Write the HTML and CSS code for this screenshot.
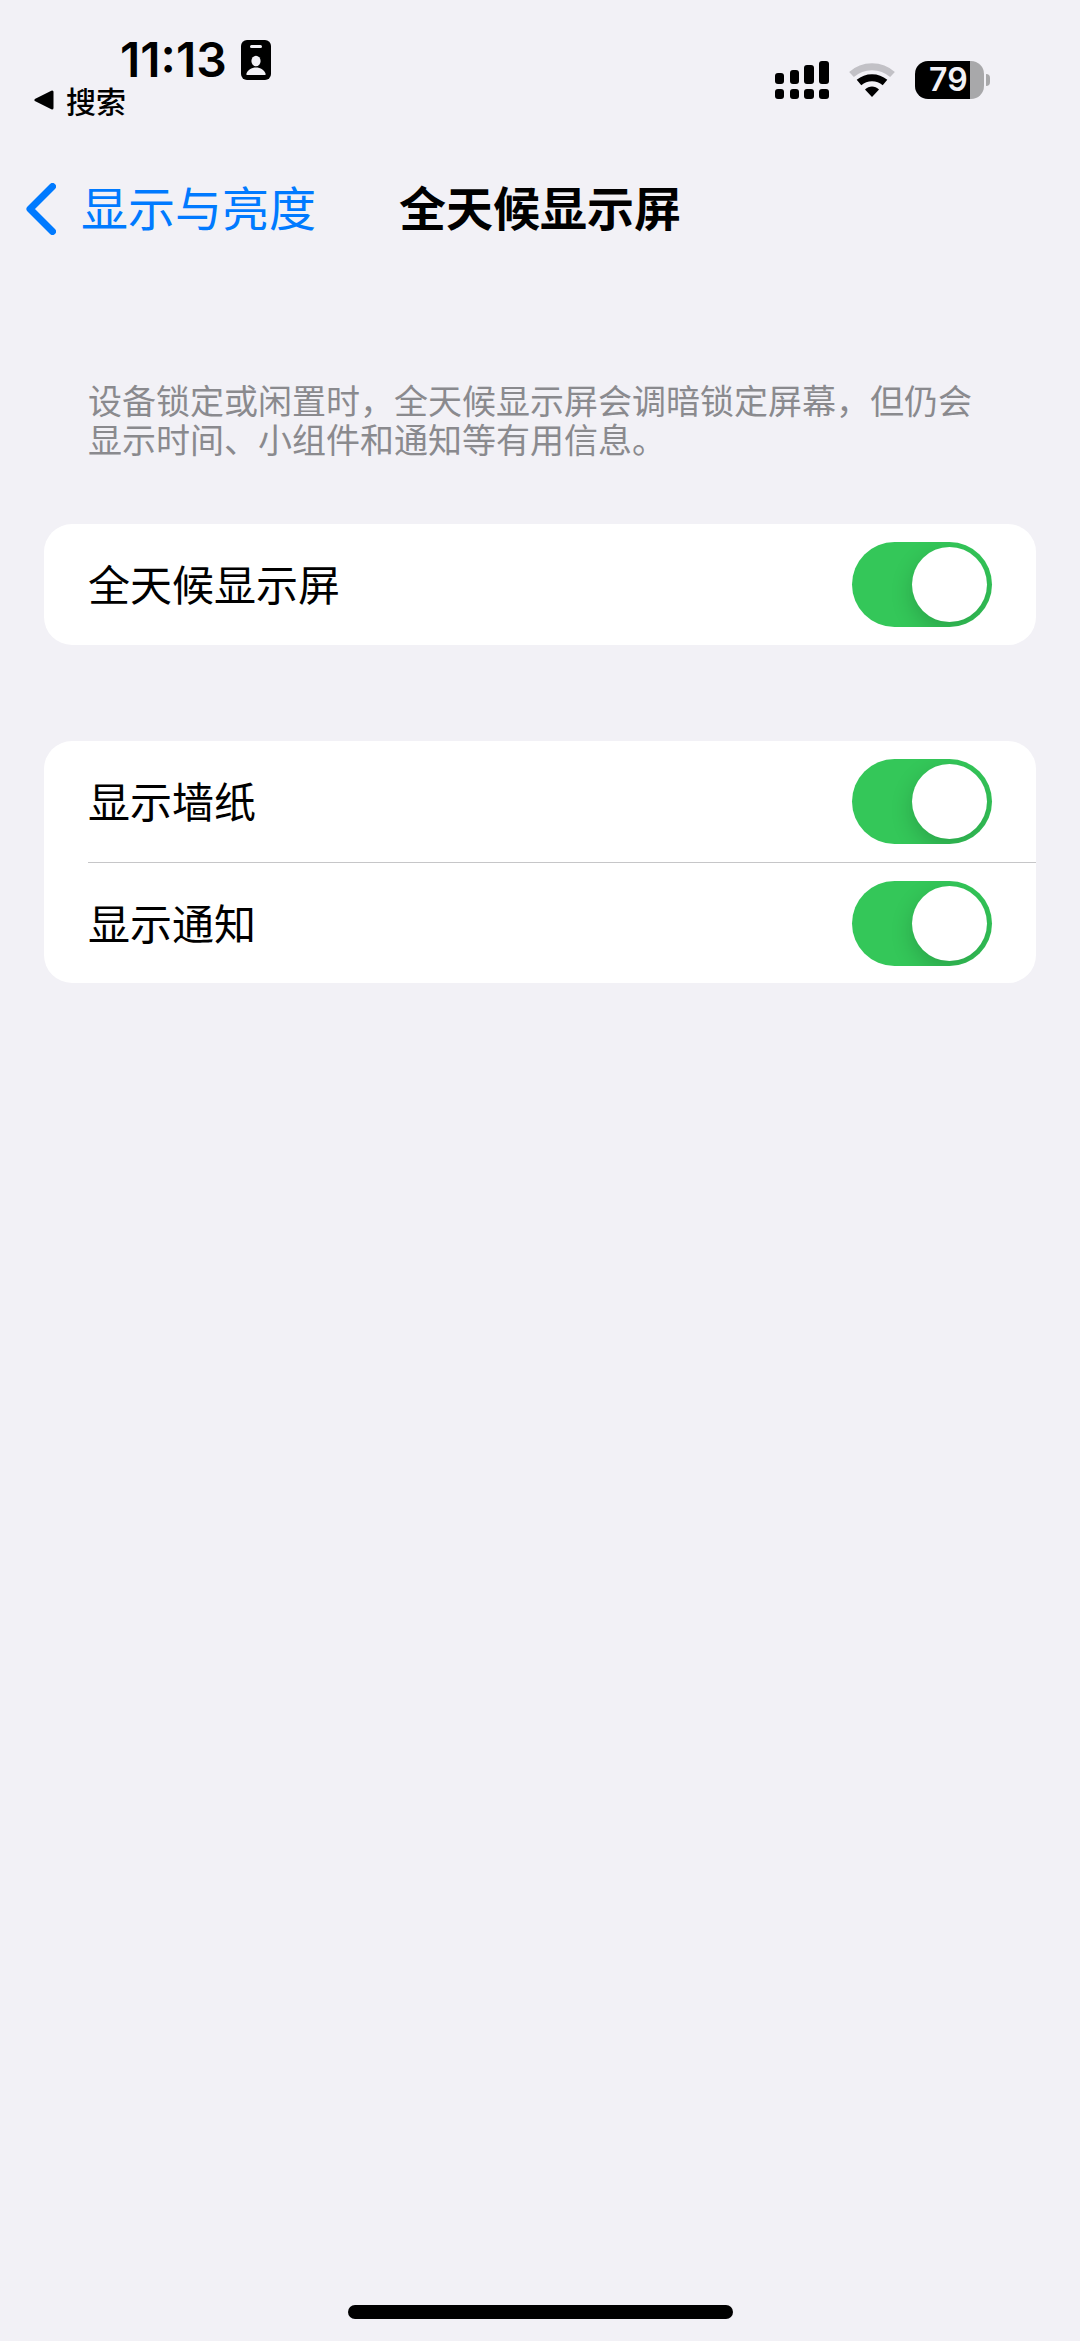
FILE: index.html
```html
<!DOCTYPE html>
<html lang="zh-CN">
<head>
    <meta charset="UTF-8">
    <meta name="viewport" content="width=device-width, initial-scale=1.0">
    <title>全天候显示屏</title>
    <link rel="stylesheet" href="styles.css">
</head>
<body>
    <header class="status-bar">
        <div class="status-left">
            <div class="clock">
                <time class="time">11:13</time>
                <svg class="id-card" width="30" height="40" viewBox="0 0 30 40" aria-hidden="true">
                    <rect width="30" height="40" rx="6" fill="#000"/>
                    <rect x="9" y="5" width="12" height="3" rx="1.500" fill="#f2f1f6"/>
                    <ellipse cx="15" cy="21" rx="4.600" ry="5.200" fill="#f2f1f6"/>
                    <path d="M6 35c-.6 0-.8-.6-.6-1.200C6.500 30 10.500 27.500 15 27.500s8.500 2.500 9.600 6.300c.2.600 0 1.200-.6 1.200z" fill="#f2f1f6"/>
                </svg>
            </div>
            <a class="back-app" href="#">
                <svg width="20" height="20" viewBox="0 0 20 20" aria-hidden="true">
                    <path d="M2 10 18 2v16z" stroke="#000" stroke-width="3" stroke-linejoin="round"/>
                </svg>
                <span>搜索</span>
            </a>
        </div>
        <div class="status-right">
            <svg width="54" height="38" viewBox="0 0 54 38" aria-hidden="true">
                <rect x="0" y="12" width="9" height="11" rx="3"/>
                <rect x="15" y="9" width="9" height="14" rx="3"/>
                <rect x="29" y="4" width="10" height="19" rx="3"/>
                <rect x="44" y="0" width="10" height="23" rx="3"/>
                <rect x="0" y="28" width="9" height="10" rx="3"/>
                <rect x="15" y="28" width="9" height="10" rx="3"/>
                <rect x="29" y="28" width="10" height="10" rx="3"/>
                <rect x="44" y="28" width="10" height="10" rx="3"/>
            </svg>
            <svg width="48" height="36" viewBox="0 0 48 36" aria-hidden="true">
                <path d="M3.500 12.500C15 2 33 2 44.500 12.500" fill="none" stroke="#c2c1c6" stroke-width="7"/>
                <path d="M11 20.500C18.500 14 29.500 14 37 20.500" fill="none" stroke="#000" stroke-width="7"/>
                <path d="M17 27.500c4-4 10-4 14 0L24 35z"/>
            </svg>
            <div class="battery">
                <div class="battery-body">79</div>
                <div class="battery-tip"></div>
            </div>
        </div>
    </header>

    <nav class="nav-bar">
        <a class="nav-back" href="#">
            <svg width="30" height="52" viewBox="0 0 30 52" aria-hidden="true">
                <path d="M26.500 3.500 4 26l22.500 22.500" fill="none" stroke="#007aff" stroke-width="7" stroke-linecap="round" stroke-linejoin="round"/>
            </svg>
            <span>显示与亮度</span>
        </a>
        <h1>全天候显示屏</h1>
    </nav>

    <main class="settings">
        <p class="note">设备锁定或闲置时，全天候显示屏会调暗锁定屏幕，但仍会显示时间、小组件和通知等有用信息。</p>

        <section class="card">
            <div class="row">
                <label for="always-on">全天候显示屏</label>
                <input class="switch" type="checkbox" role="switch" id="always-on" checked>
            </div>
        </section>

        <section class="card">
            <div class="row">
                <label for="wallpaper">显示墙纸</label>
                <input class="switch" type="checkbox" role="switch" id="wallpaper" checked>
            </div>
            <div class="row">
                <label for="notifications">显示通知</label>
                <input class="switch" type="checkbox" role="switch" id="notifications" checked>
            </div>
        </section>
    </main>

    <div class="home-indicator"></div>
</body>
</html>
```

FILE: styles.css
```css
* {
    box-sizing: border-box;
}
body {
    margin: 0;
    min-height: 100vh;
    display: flex;
    flex-direction: column;
    background: #f2f1f6;
    color: #000;
    font-family: "Noto Sans CJK SC", sans-serif;
}
a {
    text-decoration: none;
}

/* Status bar */
.status-bar {
    display: flex;
    justify-content: space-between;
    align-items: flex-start;
    padding: 36px 90px 0 34px;
}
.clock {
    display: flex;
    align-items: center;
    gap: 14px;
    height: 48px;
    padding-left: 86px;
}
.time {
    font-family: Inter, sans-serif;
    font-size: 48px;
    font-weight: 600;
    line-height: 48px;
}
.back-app {
    display: flex;
    align-items: center;
    gap: 12px;
    color: #000;
    font-size: 30px;
    font-weight: 500;
    line-height: 32px;
}
.status-right {
    display: flex;
    align-items: center;
    gap: 19px;
    padding-top: 25px;
}
.battery {
    display: flex;
    align-items: center;
    gap: 2px;
}
.battery-body {
    width: 69px;
    height: 38px;
    padding-left: 14px;
    border-radius: 13px;
    background: linear-gradient(to right, #000 79%, #a8a8aa 79%);
    color: #f2f1f6;
    font-family: Inter, sans-serif;
    font-size: 32px;
    font-weight: 600;
    line-height: 38px;
}
.battery-tip {
    width: 4px;
    height: 12px;
    border-radius: 0 6px 6px 0;
    background: #a8a8aa;
}

/* Navigation bar */
.nav-bar {
    display: grid;
    grid-template-columns: 1fr auto 1fr;
    align-items: center;
    padding: 60px 26px 0;
}
.nav-back {
    display: flex;
    align-items: center;
    gap: 25px;
    color: #007aff;
    font-size: 47px;
    line-height: 60px;
    white-space: nowrap;
}
.nav-back span,
.nav-bar h1 {
    padding-bottom: 6px;
}
.nav-bar h1 {
    margin: 0;
    font-size: 47px;
    font-weight: 700;
    line-height: 60px;
}

/* Settings list */
.settings {
    padding: 138px 44px 0;
}
.note {
    margin: 0 0 66px;
    padding: 0 44px;
    color: #8a8a8e;
    font-size: 34px;
    line-height: 39px;
}
.card {
    margin-bottom: 96px;
    border-radius: 28px;
    background: #fff;
}
.row {
    display: flex;
    align-items: center;
    justify-content: space-between;
    height: 121px;
    margin-left: 44px;
    padding-right: 44px;
    font-size: 42px;
}
.row label {
    padding-bottom: 4px;
}
.row + .row {
    border-top: 1px solid #c6c6c8;
}
.switch {
    appearance: none;
    display: flex;
    align-items: center;
    width: 140px;
    height: 85px;
    margin: 0;
    padding: 5px;
    border-radius: 43px;
    background: #e9e9ea;
    overflow: hidden;
    cursor: pointer;
}
.switch::before {
    content: "";
    width: 75px;
    height: 75px;
    border-radius: 50%;
    background: #fff;
    box-shadow: 0 8px 22px rgba(0, 0, 0, 0.18);
}
.switch:checked {
    justify-content: flex-end;
    background: #34c759;
}

.home-indicator {
    align-self: center;
    width: 385px;
    height: 14px;
    margin: auto 0 22px;
    border-radius: 7px;
    background: #000;
}
```
